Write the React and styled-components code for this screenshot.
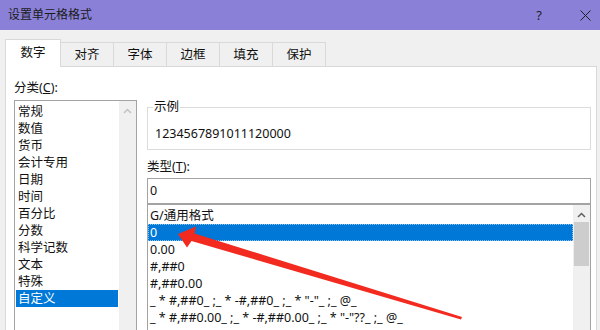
import React from "react";
import styled, { createGlobalStyle } from "styled-components";

const GlobalStyle = createGlobalStyle`
  html, body {
    margin: 0;
    padding: 0;
  }
  body {
    width: 600px;
    height: 330px;
    overflow: hidden;
    background: #f0f0f0;
    font-family: "Noto Sans", "Noto Sans CJK SC", sans-serif;
    font-size: 12.5px;
    color: #000;
  }
`;

const categories = [
  "常规",
  "数值",
  "货币",
  "会计专用",
  "日期",
  "时间",
  "百分比",
  "分数",
  "科学记数",
  "文本",
  "特殊",
  "自定义",
];

const formats = [
  "G/通用格式",
  "0",
  "0.00",
  "#,##0",
  "#,##0.00",
  '_ * #,##0_ ;_ * -#,##0_ ;_ * "-"_ ;_ @_',
  '_ * #,##0.00_ ;_ * -#,##0.00_ ;_ * "-"??_ ;_ @_',
];

const tabs = ["数字", "对齐", "字体", "边框", "填充", "保护"];

const Chevron = ({ color }) => (
  <svg width="9" height="6" viewBox="0 0 9 6">
    <path d="M1 5 L4.5 1.5 L8 5" fill="none" stroke={color} strokeWidth="1.5" />
  </svg>
);

const App = () => {
  return (
    <Dialog>
      <GlobalStyle />
      <TitleBar>
        <Title>设置单元格格式</Title>
        <Help>?</Help>
        <svg width="11" height="11" viewBox="0 0 11 11">
          <path d="M0.5 0.5 L10.5 10.5 M10.5 0.5 L0.5 10.5" stroke="#1e1e1e" strokeWidth="1" />
        </svg>
      </TitleBar>

      <TabRow>
        {tabs.map((t, i) => (
          <Tab key={t} active={i === 0}>
            {t}
          </Tab>
        ))}
      </TabRow>

      <Panel>
        <Columns>
          <LeftCol>
            <Label>
              分类(<u>C</u>):
            </Label>
            <ListBox height={240}>
              <Items>
                {categories.map((c, i) => (
                  <Item key={c} selected={i === categories.length - 1}>
                    {c}
                  </Item>
                ))}
              </Items>
              <ScrollBar>
                <ScrollButton>
                  <Chevron color="#c2c2c2" />
                </ScrollButton>
              </ScrollBar>
            </ListBox>
          </LeftCol>

          <RightCol>
            <GroupBox>
              <Legend>示例</Legend>
              <Sample>1234567891011120000</Sample>
            </GroupBox>
            <TypeLabel>
              类型(<u>T</u>):
            </TypeLabel>
            <TypeInput>0</TypeInput>
            <ListBox height={140}>
              <Items>
                {formats.map((f, i) => (
                  <Item key={f} selected={i === 1} focused={i === 1} wide>
                    {f}
                  </Item>
                ))}
              </Items>
              <ScrollBar>
                <ScrollButton>
                  <Chevron color="#606060" />
                </ScrollButton>
                <Thumb />
              </ScrollBar>
            </ListBox>
          </RightCol>
        </Columns>
      </Panel>

      <ArrowLayer width="600" height="330" viewBox="0 0 600 330">
        <polygon
          points="178,234 196,226.5 194.5,233.5 462,317 461,319.5 191.5,241 187,247.5"
          fill="#f22a1f"
        />
      </ArrowLayer>
    </Dialog>
  );
};

export default App;

const Dialog = styled.div`
  position: relative;
  width: 600px;
  height: 330px;
  overflow: hidden;
  display: flex;
  flex-direction: column;
`;

const TitleBar = styled.div`
  flex: none;
  height: 30px;
  box-sizing: border-box;
  background: #8a80d7;
  display: flex;
  align-items: center;
  padding: 0 9px 0 8px;
`;

const Title = styled.div`
  flex: 1;
  font-size: 12px;
  line-height: 16px;
  color: #1b1b1b;
`;

const Help = styled.span`
  font-size: 13px;
  line-height: 16px;
  color: #222;
  margin-right: 38px;
`;

const TabRow = styled.div`
  flex: none;
  display: flex;
  align-items: flex-start;
  height: 28px;
  margin: 9px 0 -1px 0;
  padding-left: 5px;
  position: relative;
  z-index: 1;
`;

const Tab = styled.div`
  box-sizing: border-box;
  width: ${(p) => (p.active ? 56 : 54)}px;
  height: ${(p) => (p.active ? 28 : 24)}px;
  margin-top: ${(p) => (p.active ? 0 : 3)}px;
  margin-left: -1px;
  border: 1px solid #d9d9d9;
  border-bottom: none;
  background: ${(p) => (p.active ? "#fff" : "#f0f0f0")};
  display: flex;
  align-items: center;
  justify-content: center;
  padding-bottom: ${(p) => (p.active ? 2 : 0)}px;
  line-height: 16px;
  color: #111;
  position: relative;
  z-index: ${(p) => (p.active ? 2 : 1)};
  &:first-child {
    margin-left: 0;
  }
`;

const Panel = styled.div`
  flex: 1;
  background: #fff;
  border: 1px solid #d9d9d9;
  margin: 0 3px 0 5px;
  padding: 13px 5px 0 8px;
`;

const Columns = styled.div`
  display: grid;
  grid-template-columns: 123px 444px;
  column-gap: 10px;
`;

const LeftCol = styled.div`
  display: flex;
  flex-direction: column;
`;

const RightCol = styled.div`
  display: flex;
  flex-direction: column;
  padding-top: 19px;
`;

const Label = styled.div`
  line-height: 16px;
  margin-bottom: 4px;
  color: #111;
`;

const TypeLabel = styled(Label)`
  margin: 9px 0 3px 0;
`;

const ListBox = styled.div`
  display: flex;
  height: ${(p) => p.height}px;
  border: 1px solid #a3a3a3;
  background: #fff;
  flex: none;
`;

const Items = styled.div`
  flex: 1;
  padding-top: 2px;
  min-width: 0;
`;

const Item = styled.div`
  height: 17px;
  line-height: 17px;
  white-space: nowrap;
  padding-left: 2px;
  margin: ${(p) => (p.wide ? "0" : "0 1px")};
  color: ${(p) => (p.selected ? "#fff" : "#111")};
  background: ${(p) => (p.selected ? "#0078d7" : "transparent")};
  outline: ${(p) => (p.focused ? "1px dotted rgba(255,255,255,0.55)" : "none")};
  outline-offset: -1px;
`;

const ScrollBar = styled.div`
  width: 17px;
  flex: none;
  background: #f0f0f0;
  display: flex;
  flex-direction: column;
  align-items: center;
`;

const ScrollButton = styled.div`
  height: 17px;
  width: 17px;
  display: flex;
  align-items: center;
  justify-content: center;
  padding-top: 3px;
  box-sizing: border-box;
`;

const Thumb = styled.div`
  width: 15px;
  height: 44px;
  background: #cdcdcd;
`;

const GroupBox = styled.fieldset`
  margin: 0;
  padding: 0;
  min-width: 0;
  border: 1px solid #dcdcdc;
`;

const Legend = styled.legend`
  padding: 0 1px;
  margin-left: 5px;
  line-height: 16px;
  color: #111;
`;

const Sample = styled.div`
  padding: 11px 7px 7px;
  line-height: 16px;
  color: #111;
`;

const TypeInput = styled.div`
  box-sizing: border-box;
  height: 26px;
  border: 1px solid #a3a3a3;
  padding-left: 2px;
  line-height: 24px;
  color: #111;
`;

const ArrowLayer = styled.svg`
  position: absolute;
  left: 0;
  top: 0;
  pointer-events: none;
  z-index: 5;
`;
